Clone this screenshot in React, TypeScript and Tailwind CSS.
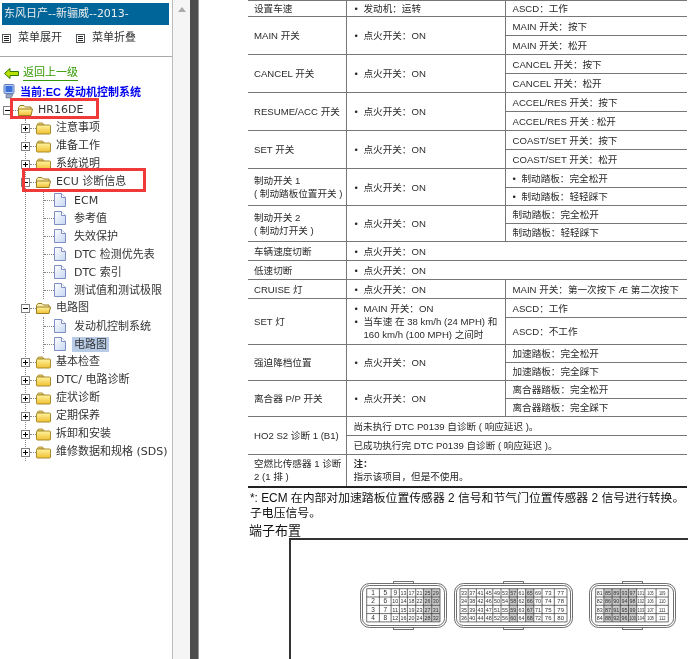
import type { ReactNode } from "react";

type Row = { name: ReactNode; mid?: ReactNode; right: ReactNode[]; h: number[]; span?: boolean };

const ON = <Bullet>点火开关：ON</Bullet>;

function Bullet({ children }: { children: ReactNode }) {
  return (
    <div className="flex">
      <span className="w-[9px] shrink-0">•</span>
      <span>{children}</span>
    </div>
  );
}

const rows: Row[] = [
  { name: "设置车速", mid: <Bullet>发动机：运转</Bullet>, right: ["ASCD：工作"], h: [16] },
  { name: "MAIN 开关", mid: ON, right: ["MAIN 开关：按下", "MAIN 开关：松开"], h: [19, 19] },
  { name: "CANCEL 开关", mid: ON, right: ["CANCEL 开关：按下", "CANCEL 开关：松开"], h: [19, 19] },
  { name: "RESUME/ACC 开关", mid: ON, right: ["ACCEL/RES 开关：按下", "ACCEL/RES 开关 : 松开"], h: [19, 19] },
  { name: "SET 开关", mid: ON, right: ["COAST/SET 开关：按下", "COAST/SET 开关：松开"], h: [19, 19] },
  {
    name: <>制动开关 1<br />( 制动踏板位置开关 )</>,
    mid: ON,
    right: [<Bullet>制动踏板：完全松开</Bullet>, <Bullet>制动踏板：轻轻踩下</Bullet>],
    h: [19, 18],
  },
  { name: <>制动开关 2<br />( 制动灯开关 )</>, mid: ON, right: ["制动踏板：完全松开", "制动踏板：轻轻踩下"], h: [18, 18] },
  { name: "车辆速度切断", mid: ON, right: [], h: [19], span: true },
  { name: "低速切断", mid: ON, right: [], h: [19], span: true },
  { name: "CRUISE 灯", mid: ON, right: ["MAIN 开关：第一次按下 Æ 第二次按下"], h: [19] },
  {
    name: "SET 灯",
    mid: (
      <>
        <Bullet>MAIN 开关：ON</Bullet>
        <Bullet>当车速 在 38 km/h (24 MPH) 和<br />160 km/h (100 MPH) 之间时</Bullet>
      </>
    ),
    right: ["ASCD：工作", "ASCD：不工作"],
    h: [19, 27],
  },
  { name: "强迫降档位置", mid: ON, right: ["加速踏板：完全松开", "加速踏板：完全踩下"], h: [18, 18] },
  { name: "离合器 P/P 开关", mid: ON, right: ["离合器踏板：完全松开", "离合器踏板：完全踩下"], h: [18, 18] },
];

function SpecTable() {
  return (
    <table className="w-[439px] shrink-0 table-fixed border-collapse border-b-2 border-[#222] text-[9.6px] leading-[13px] text-[#2a2a2a]">
      <colgroup>
        <col className="w-[98px]" />
        <col className="w-[159px]" />
        <col />
      </colgroup>
      <tbody>
        {rows.map((r, i) =>
          r.h.map((h, j) => (
            <tr key={`${i}-${j}`} style={{ height: h }}>
              {j === 0 && (
                <td rowSpan={r.h.length} className="border-y border-r border-[#777] pl-[6px] pr-0 align-middle whitespace-nowrap">
                  {r.name}
                </td>
              )}
              {j === 0 && (
                <td
                  rowSpan={r.h.length}
                  colSpan={r.span ? 2 : 1}
                  className={`border-y border-[#777] pl-[8px] align-middle whitespace-nowrap ${r.span ? "" : "border-r"}`}
                >
                  {r.mid}
                </td>
              )}
              {!r.span && <td className="border-y border-[#777] pl-[7px] align-middle whitespace-nowrap">{r.right[j]}</td>}
            </tr>
          )),
        )}
        <tr className="h-[19px]">
          <td rowSpan={2} className="border-y border-r border-[#777] pl-[6px] align-middle whitespace-nowrap">HO2 S2 诊断 1 (B1)</td>
          <td colSpan={2} className="border-y border-[#777] pl-[7px]">尚未执行 DTC P0139 自诊断 ( 响应延迟 )。</td>
        </tr>
        <tr className="h-[19px]">
          <td colSpan={2} className="border-y border-[#777] pl-[7px]">已成功执行完 DTC P0139 自诊断 ( 响应延迟 )。</td>
        </tr>
        <tr className="h-[32px]">
          <td className="border-t border-r border-[#777] pl-[6px] align-middle">空燃比传感器 1 诊断 2 (1 排 )</td>
          <td colSpan={2} className="border-t border-[#777] pl-[7px] align-middle">
            <div className="font-bold">注：</div>
            <div>指示该项目，但是不使用。</div>
          </td>
        </tr>
      </tbody>
    </table>
  );
}

function Connector({ w, gx, cols, start, shade }: { w: number; gx: number; cols: number[]; start: number; shade: number[] }) {
  const rowH = 8.3;
  const gy = 7.7;
  const total = cols.reduce((a, b) => a + b, 0);
  let x = gx;
  const mid = w / 2;
  return (
    <svg width={w} height={49} viewBox={`0 0 ${w} 49`} className="shrink-0" fill="none" stroke="#333" strokeWidth="0.7">
      <path d={`M${mid - 10} 2.5V0.5H${mid + 10}V2.5M${mid - 10} 46.5V48.5H${mid + 10}V46.5`} />
      <rect x="0.5" y="2.5" width={w - 1} height="44" rx="9" />
      <rect x="2.5" y="4.5" width={w - 5} height="40" rx="7" />
      {cols.map((cw, c) => {
        const cx = x;
        x += cw;
        const first = start + c * 4;
        return (
          <g key={c}>
            {shade.includes(c) && <rect x={cx} y={gy} width={cw} height={rowH * 4} fill="#c8c8c8" stroke="none" />}
            {[0, 1, 2, 3].map((r) => (
              <text
                key={r}
                x={cx + cw / 2}
                y={gy + rowH * r + 6.4}
                textAnchor="middle"
                fontSize={first + r > 9 ? 6 : 6.5}
                fill="#333"
                stroke="none"
                fontFamily="Liberation Sans, sans-serif"
                textLength={first + r > 99 ? Math.min(cw - 1.5, 6.5) : first + r > 9 && cw < 9 ? 6 : undefined}
                lengthAdjust="spacingAndGlyphs"
              >
                {first + r}
              </text>
            ))}
            <path d={`M${cx} ${gy}V${gy + rowH * 4}`} />
          </g>
        );
      })}
      <path d={`M${gx + total} ${gy}V${gy + rowH * 4}`} />
      {[0, 1, 2, 3, 4].map((r) => (
        <path key={r} d={`M${gx} ${gy + rowH * r}H${gx + total}`} />
      ))}
    </svg>
  );
}

function PlusBox({ open }: { open?: boolean }) {
  return (
    <svg width="9" height="9" viewBox="0 0 9 9" className="shrink-0">
      <rect x="0.5" y="0.5" width="8" height="8" fill="#fff" stroke="#808080" />
      <path d={open ? "M2 4.5H7" : "M2 4.5H7M4.5 2V7"} stroke="#000" />
    </svg>
  );
}

function Folder({ open }: { open?: boolean }) {
  return (
    <svg width="15" height="13" viewBox="0 0 15 13" className="shrink-0">
      <defs>
        <linearGradient id="fold" x1="0" y1="0" x2="0" y2="1">
          <stop offset="0" stopColor="#fff3a0" />
          <stop offset="1" stopColor="#f0c030" />
        </linearGradient>
      </defs>
      {open ? (
        <>
          <path d="M0.5 3.5L2 1.5H6L7.5 3H13V5.5H0.5Z" fill="#fbeeb0" stroke="#9a7d20" />
          <path d="M0.5 11.5V5L3 5H14.5L13 11.5Z" fill="url(#fold)" stroke="#9a7d20" />
        </>
      ) : (
        <>
          <path d="M1 3L2.5 1H6.5L8 3Z" fill="#f7e08a" stroke="#a98c2c" />
          <rect x="0.5" y="3" width="14" height="9" rx="1" fill="url(#fold)" stroke="#a98c2c" />
        </>
      )}
    </svg>
  );
}

function Doc() {
  return (
    <svg width="12" height="14" viewBox="0 0 12 14" className="shrink-0">
      <defs>
        <linearGradient id="doc" x1="0" y1="0" x2="1" y2="1">
          <stop offset="0" stopColor="#ffffff" />
          <stop offset="1" stopColor="#c6d6f2" />
        </linearGradient>
      </defs>
      <path d="M0.5 0.5H7.5L11.5 4.5V13.5H0.5Z" fill="url(#doc)" stroke="#7f8fc4" />
      <path d="M7.5 0.5V4.5H11.5" fill="#fff" stroke="#7f8fc4" />
    </svg>
  );
}

function Dots({ w }: { w: string }) {
  return <span className={`${w} shrink-0 border-t border-dotted border-[#888]`} />;
}

function Branch({ label, open, last }: { label: string; open?: boolean; last?: boolean }) {
  return (
    <div className={`flex h-[18px] items-center ${last ? "-mb-[9px]" : ""}`}>
      <span className="-ml-[5px] flex shrink-0">
        <PlusBox open={open} />
      </span>
      <Dots w="w-[6px]" />
      <Folder open={open} />
      <span className="ml-[5px] whitespace-nowrap">{label}</span>
    </div>
  );
}

function Leaf({ label, last, selected }: { label: string; last?: boolean; selected?: boolean }) {
  return (
    <div className={`flex h-[18px] items-center ${last ? "-mb-[9px]" : ""}`}>
      <Dots w="w-[10px]" />
      <Doc />
      <span className={`ml-[6px] whitespace-nowrap px-[2px] leading-[15px] ${selected ? "bg-[#b8cce8]" : ""}`}>{label}</span>
    </div>
  );
}

function MenuIcon() {
  return (
    <svg width="9" height="9" viewBox="0 0 9 9" className="shrink-0">
      <rect x="0.5" y="0.5" width="8" height="8" fill="#fff" stroke="#555" />
      <path d="M2 2.5H7M2 4.5H7M2 6.5H7" stroke="#222" />
    </svg>
  );
}

function Sidebar() {
  return (
    <aside className="relative w-[172px] shrink-0 overflow-hidden bg-white font-['DejaVu_Sans','Noto_Sans_CJK_SC',sans-serif] text-[11px] text-[#333]">
      <div className="mx-[2px] mt-[3px] flex h-[22px] w-[167px] items-center bg-[#006699] pl-[2px] text-[#eee] whitespace-nowrap">
        东风日产--新骊威--2013-
      </div>
      <div className="mt-[5px] flex h-[16px] items-center pl-[2px]">
        <MenuIcon />
        <span className="ml-[7px] w-[58px]">菜单展开</span>
        <MenuIcon />
        <span className="ml-[7px]">菜单折叠</span>
      </div>
      <div className="mt-[10px] h-px bg-[#aaa]" />
      <div className="mt-[8px] flex h-[16px] items-center pl-[4px]">
        <svg width="15" height="11" viewBox="0 0 15 11" className="shrink-0">
          <path d="M6 0.5L0.5 5.5L6 10.5V7.5H14.5V3.5H6Z" fill="#b8e000" stroke="#2f7a00" />
        </svg>
        <span className="ml-[4px] border-b border-[#339900] text-[#339900] leading-[14px]">返回上一级</span>
      </div>
      <div className="mt-[2px] flex h-[18px] items-center pl-[3px]">
        <svg width="12" height="16" viewBox="0 0 12 16" className="shrink-0">
          <rect x="1" y="0.5" width="10" height="9" rx="1" fill="#b9cdf0" stroke="#5f7fc0" />
          <rect x="2.5" y="2" width="7" height="6" fill="#3d6fd8" />
          <path d="M3 10.5H10L8 14H3Z" fill="#9aa6bd" stroke="#5a6a8a" strokeWidth="0.6" />
        </svg>
        <span className="ml-[5px] font-['Liberation_Sans','Noto_Sans_CJK_SC',sans-serif] font-bold text-[#0000ee] whitespace-nowrap">
          当前:EC 发动机控制系统
        </span>
      </div>
      <div className="flex h-[18px] items-center pl-[3px]">
        <PlusBox open />
        <Dots w="w-[6px]" />
        <Folder open />
        <span className="ml-[5px]">HR16DE</span>
      </div>
      <div className="ml-[25px] mb-[9px] border-l border-dotted border-[#888]">
        <Branch label="注意事项" />
        <Branch label="准备工作" />
        <Branch label="系统说明" />
        <Branch label="ECU 诊断信息" open />
        <div className="ml-[17px] mb-[9px] border-l border-dotted border-[#888]">
          <Leaf label="ECM" />
          <Leaf label="参考值" />
          <Leaf label="失效保护" />
          <Leaf label="DTC 检测优先表" />
          <Leaf label="DTC 索引" />
          <Leaf label="测试值和测试极限" last />
        </div>
        <Branch label="电路图" open />
        <div className="ml-[17px] mb-[9px] border-l border-dotted border-[#888]">
          <Leaf label="发动机控制系统" />
          <Leaf label="电路图" last selected />
        </div>
        <Branch label="基本检查" />
        <Branch label="DTC/ 电路诊断" />
        <Branch label="症状诊断" />
        <Branch label="定期保养" />
        <Branch label="拆卸和安装" />
        <Branch label="维修数据和规格 (SDS)" last />
      </div>
      {/* red annotation boxes */}
      <div className="absolute left-[10px] top-[98px] h-[21px] w-[89px] border-[3px] border-[#f03a3a]" />
      <div className="absolute left-[22px] top-[168px] h-[24px] w-[124px] border-[3px] border-[#f03a3a]" />
    </aside>
  );
}

export default function App() {
  return (
    <div className="flex h-[659px] w-[688px] overflow-hidden bg-white blur-[0.3px] font-['Liberation_Sans','Noto_Sans_CJK_SC',sans-serif]">
      <Sidebar />
      <div className="flex w-[18px] shrink-0 justify-center border-l border-[#bbb] bg-[#f5f5f5] pt-[7px]">
        <svg width="8" height="5" viewBox="0 0 8 5">
          <path d="M4 0L8 5H0Z" fill="#aaa" />
        </svg>
      </div>
      <div className="w-[8px] shrink-0 bg-[#4d4d4d]" />
      <main className="flex h-full min-w-0 flex-1 flex-col overflow-hidden border-l border-[#999] pl-[49px]">
        <SpecTable />
        <div className="mt-[3px] w-[439px] shrink-0 overflow-hidden pl-[2px] text-[11.85px] leading-[15px] text-[#111] whitespace-nowrap">
          <div>*: ECM 在内部对加速踏板位置传感器 2 信号和节气门位置传感器 2 信号进行转换。</div>
          <div>子电压信号。</div>
        </div>
        <div className="mt-[3px] h-[14px] shrink-0 pl-[1px] text-[13px] leading-[14px] text-[#111]">端子布置</div>
        <div className="ml-[41px] flex flex-1 border-l-2 border-t-2 border-[#333] pl-[69px] pt-[41px]">
          <Connector w={87} gx={6.7} cols={[12.7, 11.7, 8.3, 8, 8.3, 7.7, 8.3, 8.3]} start={1} shade={[6, 7]} />
          <div className="ml-[7px]">
            <Connector w={119} gx={6} cols={[8.2, 8.2, 8.2, 8.2, 8.2, 8.2, 8.2, 8.2, 8.2, 8.2, 12.3, 12.7]} start={33} shade={[6, 8]} />
          </div>
          <div className="ml-[16px]">
            <Connector w={87} gx={6.7} cols={[8.2, 8.2, 8.2, 8.2, 8.2, 8.2, 11.2, 12.2]} start={81} shade={[1, 2, 3, 4]} />
          </div>
        </div>
      </main>
    </div>
  );
}
